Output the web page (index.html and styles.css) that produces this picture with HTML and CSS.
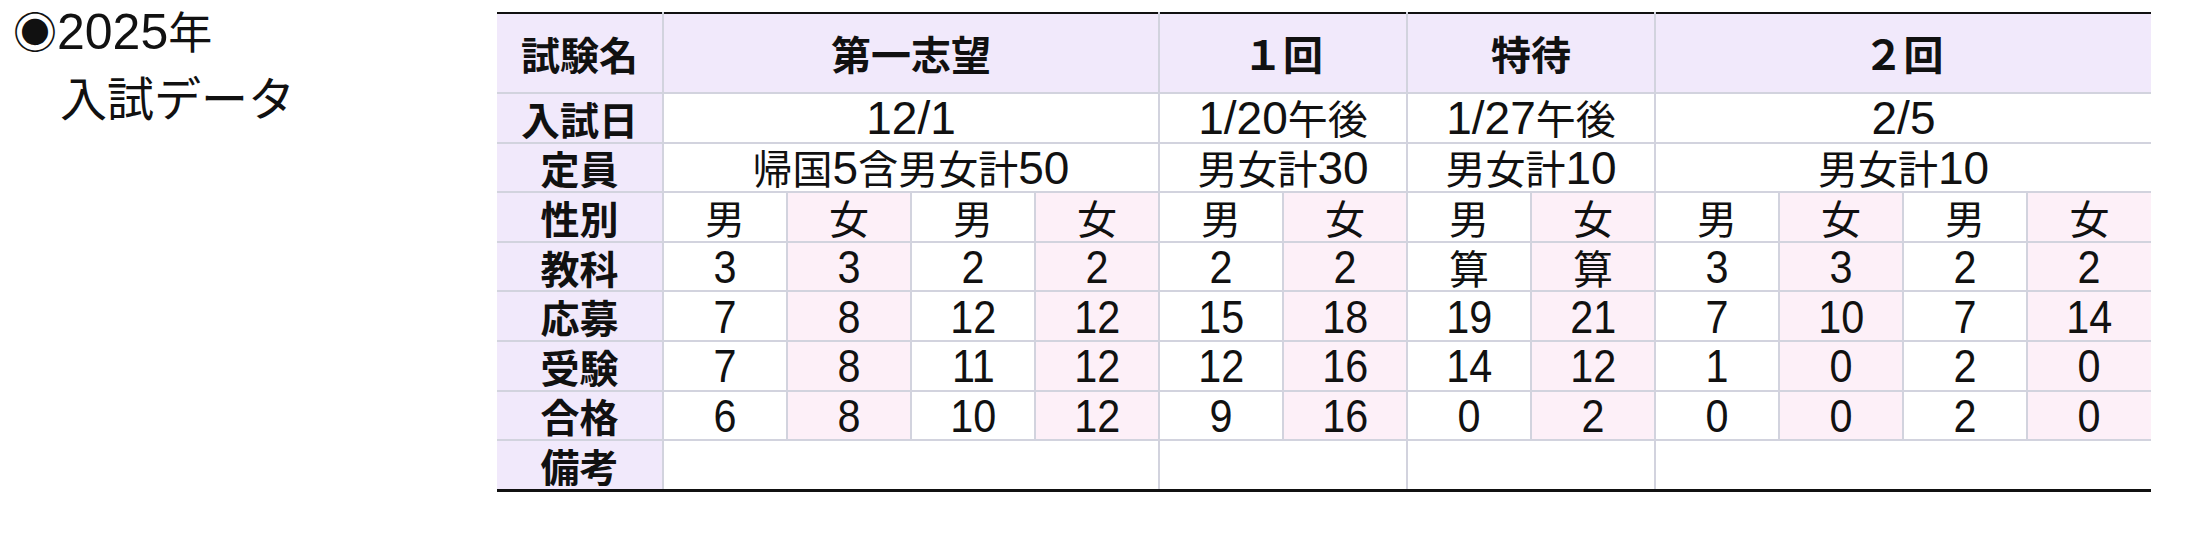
FILE: index.html
```html
<!DOCTYPE html>
<html lang="ja">
<head>
<meta charset="utf-8">
<title>2025年 入試データ</title>
<link rel="stylesheet" href="styles.css">
</head>
<body>
<div class="page">
  <h2 class="title"><span class="t1">◉<span class="tn">2025</span>年</span><span class="t2">　入試データ</span></h2>
  <table class="exam">
    <colgroup>
      <col class="c-label">
      <col span="12" class="c-data">
    </colgroup>
    <tbody>
      <tr class="r-head">
        <th class="lab">試験名</th>
        <th colspan="4">第一志望</th>
        <th colspan="2">１回</th>
        <th colspan="2">特待</th>
        <th colspan="4">２回</th>
      </tr>
      <tr>
        <th class="lab">入試日</th>
        <td colspan="4"><span class="d">12/1</span></td>
        <td colspan="2"><span class="d">1/20</span>午後</td>
        <td colspan="2"><span class="d">1/27</span>午後</td>
        <td colspan="4"><span class="d">2/5</span></td>
      </tr>
      <tr>
        <th class="lab">定員</th>
        <td colspan="4">帰国<span class="d">5</span>含男女計<span class="d">50</span></td>
        <td colspan="2">男女計<span class="d">30</span></td>
        <td colspan="2">男女計<span class="d">10</span></td>
        <td colspan="4">男女計<span class="d">10</span></td>
      </tr>
      <tr class="alt">
        <th class="lab">性別</th>
        <td>男</td><td>女</td><td>男</td><td>女</td>
        <td>男</td><td>女</td><td>男</td><td>女</td>
        <td>男</td><td>女</td><td>男</td><td>女</td>
      </tr>
      <tr class="alt">
        <th class="lab">教科</th>
        <td><span class="v">3</span></td><td><span class="v">3</span></td><td><span class="v">2</span></td><td><span class="v">2</span></td>
        <td><span class="v">2</span></td><td><span class="v">2</span></td><td>算</td><td>算</td>
        <td><span class="v">3</span></td><td><span class="v">3</span></td><td><span class="v">2</span></td><td><span class="v">2</span></td>
      </tr>
      <tr class="alt">
        <th class="lab">応募</th>
        <td><span class="v">7</span></td><td><span class="v">8</span></td><td><span class="v">12</span></td><td><span class="v">12</span></td>
        <td><span class="v">15</span></td><td><span class="v">18</span></td><td><span class="v">19</span></td><td><span class="v">21</span></td>
        <td><span class="v">7</span></td><td><span class="v">10</span></td><td><span class="v">7</span></td><td><span class="v">14</span></td>
      </tr>
      <tr class="alt">
        <th class="lab">受験</th>
        <td><span class="v">7</span></td><td><span class="v">8</span></td><td><span class="v">11</span></td><td><span class="v">12</span></td>
        <td><span class="v">12</span></td><td><span class="v">16</span></td><td><span class="v">14</span></td><td><span class="v">12</span></td>
        <td><span class="v">1</span></td><td><span class="v">0</span></td><td><span class="v">2</span></td><td><span class="v">0</span></td>
      </tr>
      <tr class="alt">
        <th class="lab">合格</th>
        <td><span class="v">6</span></td><td><span class="v">8</span></td><td><span class="v">10</span></td><td><span class="v">12</span></td>
        <td><span class="v">9</span></td><td><span class="v">16</span></td><td><span class="v">0</span></td><td><span class="v">2</span></td>
        <td><span class="v">0</span></td><td><span class="v">0</span></td><td><span class="v">2</span></td><td><span class="v">0</span></td>
      </tr>
      <tr>
        <th class="lab">備考</th>
        <td colspan="4"></td>
        <td colspan="2"></td>
        <td colspan="2"></td>
        <td colspan="4"></td>
      </tr>
    </tbody>
  </table>
</div>
</body>
</html>
```

FILE: styles.css
```css
html, body {
  margin: 0;
  padding: 0;
  background: #ffffff;
}

.page {
  display: flex;
  align-items: flex-start;
  padding: 12px 0 0 0;
  font-family: "Noto Sans CJK JP", "Liberation Sans", sans-serif;
  color: #111111;
}

.title {
  width: 497px;
  flex: none;
  box-sizing: border-box;
  margin: -12px 0 0 0;
  padding-left: 13px;
  font-weight: 400;
  display: flex;
  flex-direction: column;
}

.t1 {
  display: block;
  font-size: 44px;
  line-height: 60px;
  white-space: nowrap;
}

.t1 .tn {
  font-family: "Liberation Sans", sans-serif;
  font-size: 50px;
  letter-spacing: 0;
}

.t2 {
  display: block;
  font-size: 47px;
  line-height: 68px;
  white-space: nowrap;
}

.exam {
  border-collapse: collapse;
  table-layout: fixed;
  width: 1654px;
  border-top: 2px solid #111111;
  border-bottom: 3px solid #111111;
}

.c-label { width: 166px; }
.c-data { width: 124px; }

.exam th,
.exam td {
  border: 2px solid #d2d3de;
  padding: 0;
  text-align: center;
  vertical-align: middle;
  white-space: nowrap;
  font-size: 40px;
  line-height: 40px;
  height: 47.6px;
  font-weight: 400;
  color: #111111;
}

.exam tr:first-child th,
.exam tr:first-child td {
  border-top: 2px solid #111111;
}

.exam tr:last-child th,
.exam tr:last-child td {
  border-bottom: 3px solid #111111;
}

.exam th:first-child,
.exam td:first-child {
  border-left: none;
}

.exam tr > :last-child {
  border-right: none;
}

.exam .lab {
  background: #f1e9fb;
  font-weight: 700;
  font-size: 39px;
  border-bottom-style: dotted;
}

.r-head th {
  background: #f1e9fb;
  font-weight: 700;
  height: 78px;
  font-size: 40px;
}

.alt td:nth-child(odd) {
  background: #fdf0f8;
}

.d {
  font-family: "Liberation Sans", sans-serif;
  font-size: 46px;
  line-height: 40px;
}

.v {
  display: inline-block;
  font-family: "Liberation Sans", sans-serif;
  font-size: 47px;
  line-height: 40px;
  transform: scaleX(0.88);
}
```
